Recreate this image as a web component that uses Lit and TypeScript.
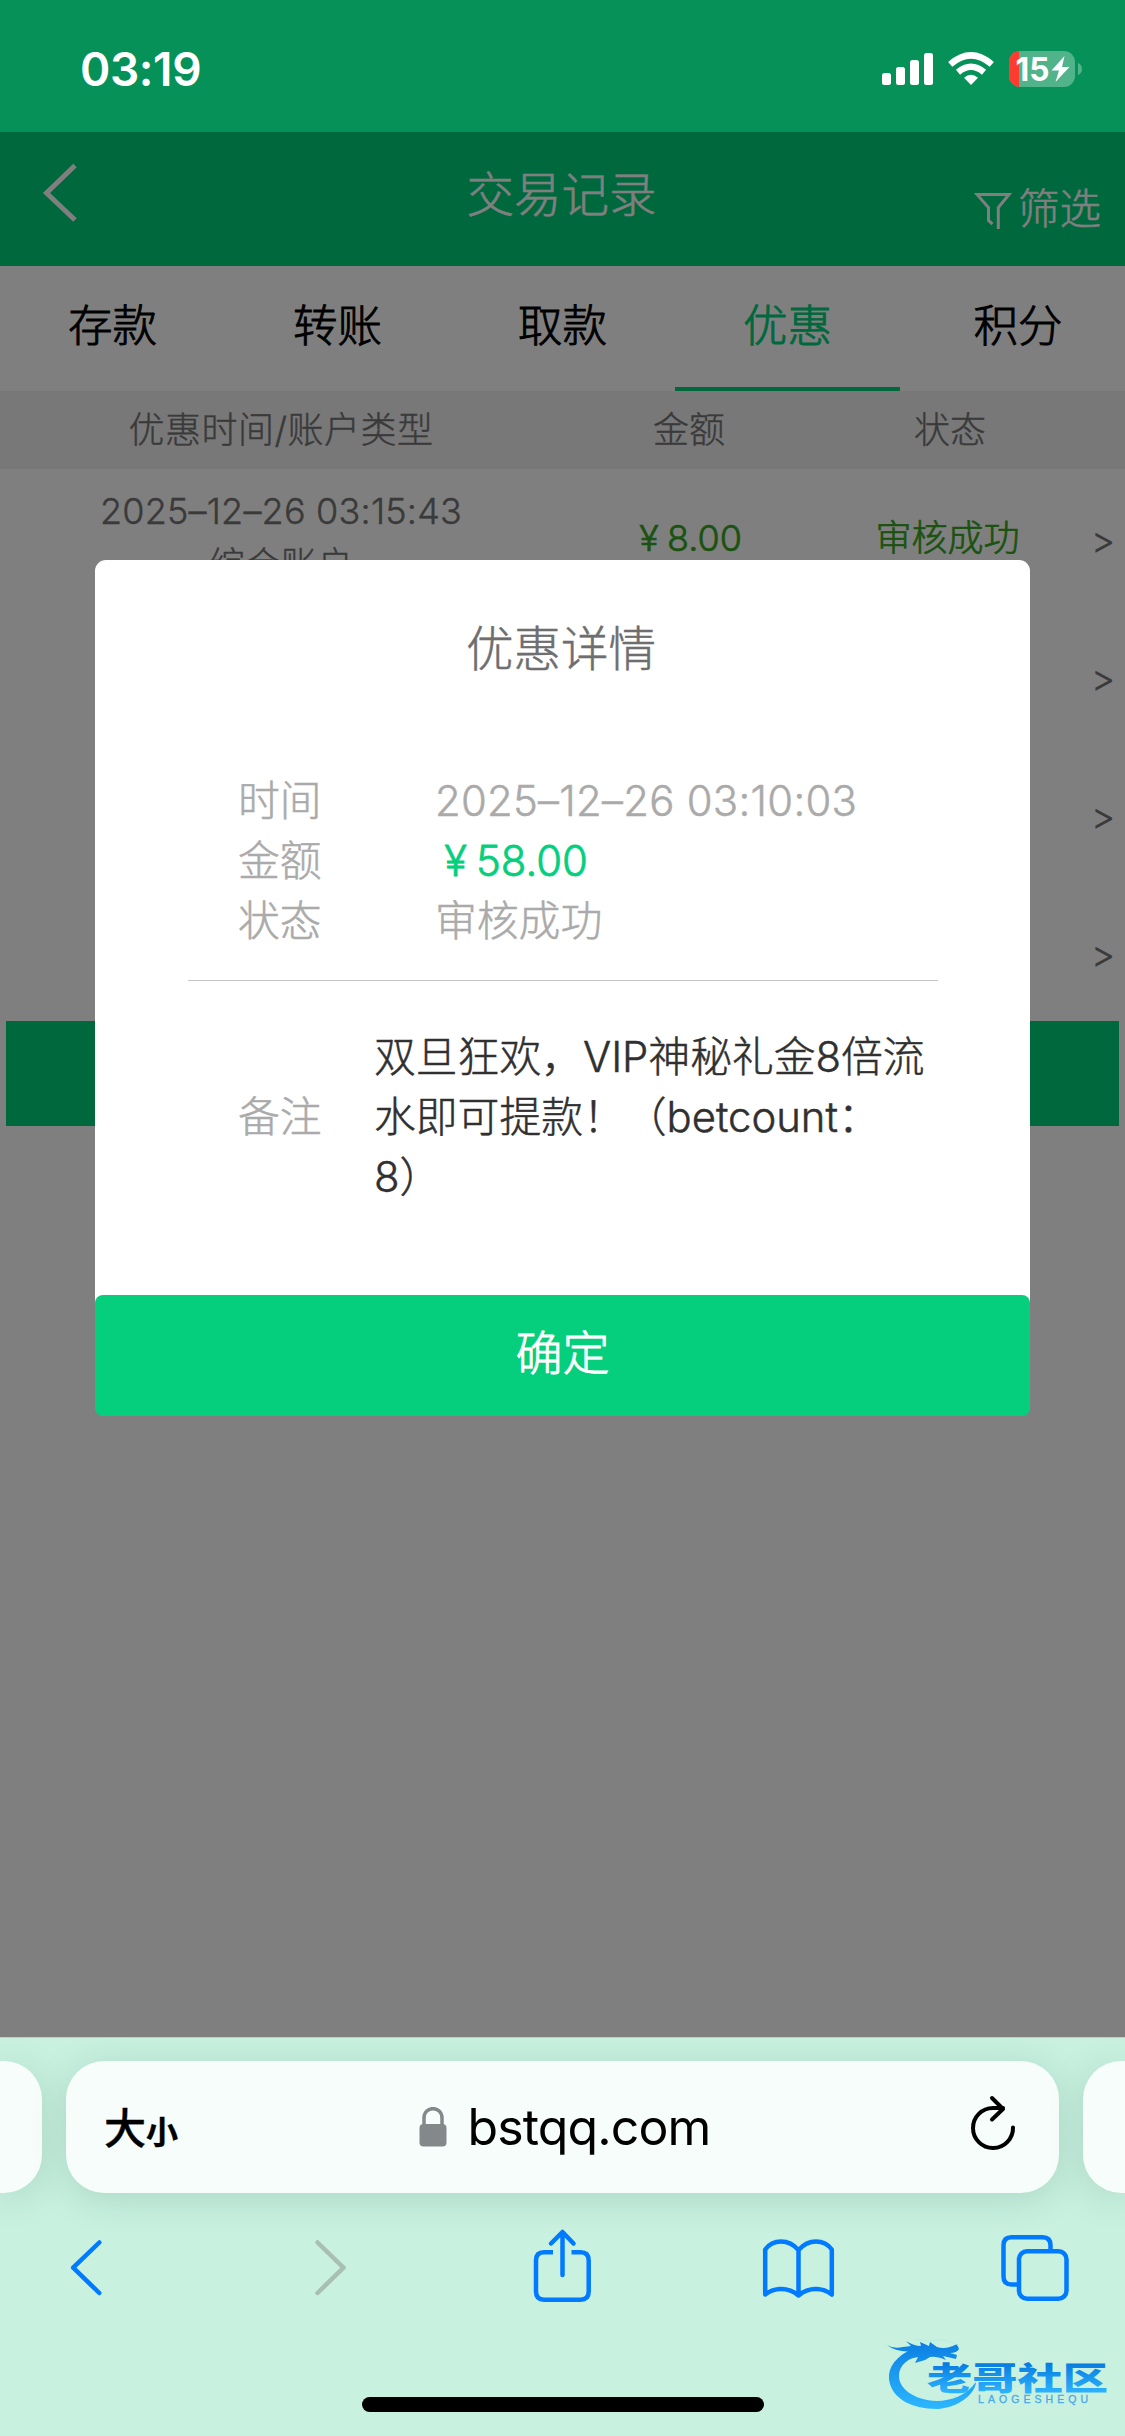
import { LitElement, html, css } from "lit";
import { customElement } from "lit/decorators.js";
import { classMap } from "lit/directives/class-map.js";

const TABS = ["存款", "转账", "取款", "优惠", "积分"];

interface RecordRow {
  time?: string;
  account?: string;
  amount?: string;
  status?: string;
}

const ROWS: RecordRow[] = [
  { time: "2025–12–26 03:15:43", account: "综合账户", amount: "8.00", status: "审核成功" },
  {},
  {},
  {},
];

@customElement("status-bar")
class StatusBar extends LitElement {
  static styles = css`
    :host {
      display: flex;
      justify-content: space-between;
      height: 132px;
      box-sizing: border-box;
      padding: 40px 43px 0 80px;
      background: #059158;
      color: #fff;
    }
    .time {
      font-size: 46px;
      line-height: 58px;
      font-weight: 600;
      letter-spacing: -0.4px;
    }
    .icons { display: block; width: 202px; height: 58px; }
    .level { font-size: 33px; font-weight: 700; }
  `;
  render() {
    return html`
      <span class="time">03:19</span>
      <svg class="icons" viewBox="880 40 202 58">
        <g fill="#fff">
          <rect x="882" y="73" width="9" height="12" rx="2.5" />
          <rect x="896" y="67" width="9" height="18" rx="2.5" />
          <rect x="910" y="60" width="9" height="25" rx="2.5" />
          <rect x="924" y="53" width="9" height="32" rx="2.5" />
          <path d="M971 85 l-7 -7.3 q7 -5.8 14 0z" />
        </g>
        <g fill="none" stroke="#fff" stroke-width="6.4">
          <path d="M950.2 64.3 q20.8 -18 41.6 0" />
          <path d="M958 72.3 q13 -11 26 0" />
        </g>
        <clipPath id="cell"><rect x="1009" y="51" width="66" height="36" rx="11" /></clipPath>
        <g clip-path="url(#cell)">
          <rect x="1009" y="51" width="66" height="36" fill="#50b38a" />
          <rect x="1009" y="51" width="10" height="36" fill="#ff3b30" />
        </g>
        <path d="M1078 63 q4 1.5 4 6 q0 4.5 -4 6z" fill="#50b38a" />
        <text class="level" x="1015.5" y="81" fill="#fff" textLength="34" lengthAdjust="spacingAndGlyphs">15</text>
        <path d="M1064.5 56 L1051.5 70.5 H1059 L1055.5 82 L1069.5 67 H1062z" fill="#fff" />
      </svg>
    `;
  }
}

@customElement("nav-header")
class NavHeader extends LitElement {
  static styles = css`
    :host {
      display: grid;
      grid-template-columns: 1fr auto 1fr;
      height: 134px;
      background: #00d07a;
      color: #fff;
      font-weight: 300;
      -webkit-text-stroke: 0.5px currentColor;
    }
    .back { width: 44px; height: 66px; margin: 28px 0 0 39px; }
    .title { font-size: 47.5px; line-height: 126px; margin-left: -2px; }
    .filter {
      display: flex;
      justify-content: flex-end;
      gap: 6px;
      padding: 47px 24px 0 0;
      font-size: 41.5px;
      line-height: 60px;
    }
    .funnel { width: 38px; height: 38px; margin-top: 13px; }
  `;
  render() {
    return html`
      <svg class="back" viewBox="0 0 44 66" fill="none" stroke="#fff" stroke-width="5">
        <path d="M36 5.5 L7.5 33 L36 60" />
      </svg>
      <span class="title">交易记录</span>
      <span class="filter">
        <svg class="funnel" viewBox="0 0 38 38" fill="none" stroke="#fff" stroke-width="3">
          <path d="M24.3 37 V15.5 L35 2.500 H3 L14.500 15.500 V28.500 L18.500 32" />
        </svg>
        <span>筛选</span>
      </span>
    `;
  }
}

@customElement("record-list")
class RecordList extends LitElement {
  static styles = css`
    :host { display: block; background: #fff; color: #747474; font-weight: 300; -webkit-text-stroke: 0.4px currentColor; }
    .tabs { display: grid; grid-template-columns: repeat(5, 1fr); height: 125px; color: #000; -webkit-text-stroke: 0.9px currentColor; }
    .tab {
      box-sizing: border-box;
      font-size: 44.5px;
      line-height: 121px;
      text-align: center;
      border-bottom: 4px solid transparent;
    }
    .tab:last-child { padding-left: 11px; }
    .active { color: #00d07a; border-color: #00d07a; }
    .row { display: grid; grid-template-columns: 562px 254px 268px 41px; text-align: center; font-size: 36px; }
    .head { height: 78px; line-height: 78px; background: #f0f0f0; }
    .wide { letter-spacing: 0.5px; }
    .item { height: 138px; line-height: 138px; }
    .when { display: flex; flex-direction: column; padding-top: 15px; line-height: 54px; }
    .date { letter-spacing: 0.2px; font-feature-settings: "calt" 0; }
    .ok { color: #38a51f; margin-left: -5px; -webkit-text-stroke: 0.7px currentColor; }
    .yen { display: inline-block; width: 36px; }
    .go { font-size: 37px; line-height: 142px; margin-left: -3px; }
    .more { height: 105px; margin: 0 6px; background: #00d07a; }
  `;
  render() {
    return html`
      <div class="tabs">
        ${TABS.map((t) => html`<span class=${classMap({ tab: true, active: t === "优惠" })}>${t}</span>`)}
      </div>
      <div class="row head"><span class="wide">优惠时间/账户类型</span><span>金额</span><span>状态</span></div>
      ${ROWS.map(
        (r) => html`
          <div class="row item">
            <span class="when">
              ${r.time ? html`<span class="date">${r.time}</span><span>${r.account}</span>` : ""}
            </span>
            <span class="ok">${r.amount ? html`<span class="yen">¥</span>${r.amount}` : ""}</span>
            <span class="ok">${r.status ?? ""}</span>
            <span class="go">&gt;</span>
          </div>
        `
      )}
      <div class="more"></div>
    `;
  }
}

@customElement("detail-dialog")
class DetailDialog extends LitElement {
  static styles = css`
    :host {
      display: block;
      width: 935px;
      border-radius: 11px;
      background: #fff;
      color: #aaa;
      font-size: 41.8px;
      font-weight: 300;
      -webkit-text-stroke: 0.5px currentColor;
    }
    .title { height: 210px; line-height: 178px; margin-left: -3px; text-align: center; font-size: 47.5px; color: #6e6e6e; }
    .fields { display: grid; grid-template-columns: 197px 1fr; line-height: 60px; margin: 0 92px 0 93px; padding: 1px 0 29px 50px; border-bottom: 1px solid #c4c4c4; }
    .date { letter-spacing: 0.3px; font-feature-settings: "calt" 0; }
    .money { color: #05cf7d; -webkit-text-stroke: 0.8px currentColor; }
    .yen { display: inline-block; width: 41px; text-align: center; }
    .remark { display: grid; grid-template-columns: 136px 1fr; align-items: center; line-height: 60px; height: 314px; box-sizing: border-box; padding: 0 0 43px 143px; }
    .text { color: #303030; white-space: nowrap; font-feature-settings: "calt" 0; }
    .confirm {
      height: 121px;
      line-height: 116px;
      border-radius: 8px;
      background: #05cf7d;
      color: #fff;
      text-align: center;
      font-size: 47px;
      -webkit-text-stroke: 0.8px currentColor;
    }
  `;
  render() {
    return html`
      <div class="title">优惠详情</div>
      <div class="fields">
        <span>时间</span><span class="date">2025–12–26 03:10:03</span>
        <span>金额</span><span class="money"><span class="yen">¥</span>58.00</span>
        <span>状态</span><span>审核成功</span>
      </div>
      <div class="remark">
        <span>备注</span>
        <span class="text">双旦狂欢，VIP神秘礼金8倍流<br />水即可提款！（betcount：<br />8）</span>
      </div>
      <div class="confirm">确定</div>
    `;
  }
}

@customElement("site-badge")
class SiteBadge extends LitElement {
  static styles = css`
    :host { display: block; }
    .mark { display: block; width: 225px; height: 76px; }
    .name { font-family: "Noto Sans CJK SC", sans-serif; font-size: 32px; font-weight: 900; }
    .latin { font-family: "Liberation Sans", sans-serif; font-size: 10.5px; }
  `;
  render() {
    return html`
      <svg class="mark" viewBox="885 2336 225 76">
        <defs>
          <linearGradient id="ring" gradientUnits="userSpaceOnUse" x1="0" y1="2342" x2="0" y2="2408">
            <stop offset="0" stop-color="#0b7fe2" /><stop offset="1" stop-color="#2bb6ff" />
          </linearGradient>
          <linearGradient id="ink" gradientUnits="userSpaceOnUse" x1="0" y1="2363" x2="0" y2="2392">
            <stop offset="0" stop-color="#067be0" /><stop offset="1" stop-color="#2cb2fd" />
          </linearGradient>
        </defs>
        <g fill="url(#ring)">
          <path d="M914 2348 C896 2356 888 2367 889 2379 C891 2398 911 2409 937 2409 C957 2408 975 2395 976 2382 C967 2395 951 2401 937 2401 C914 2400 899 2389 899 2376 C899 2365 908 2358 922 2355 L926 2350z" />
          <path d="M887 2345 Q893 2349 903 2347 L911 2346 L906 2341 Q914 2346 921 2346 L920 2342 L929 2346 L930 2342 L937 2347 Q946 2350 957 2344 L959 2349 Q957 2353 950 2353 L957 2355 L956 2359 L943 2356 L946 2360 Q936 2356 930 2357 L925 2360 L915 2363 L918 2357 Q908 2360 901 2358 L914 2351 Q897 2353 887 2345z" />
        </g>
        <path d="M914 2339 Q929 2342 941 2340 Q956 2342 958 2346" fill="none" stroke="#b4e8e2" stroke-width="0.7" />
        <text class="name" x="927" y="2389.5" fill="url(#ink)" textLength="181" lengthAdjust="spacingAndGlyphs">老哥社区</text>
        <text class="latin" x="978" y="2402.5" fill="#4aa9ea" stroke="#4aa9ea" stroke-width="0.3" textLength="110">LAOGESHEQU</text>
      </svg>
    `;
  }
}

@customElement("browser-bar")
class BrowserBar extends LitElement {
  static styles = css`
    :host {
      display: flex;
      flex-direction: column;
      position: relative;
      height: 399px;
      box-sizing: border-box;
      border-top: 1px solid #b4d3c6;
      background: #c8f1e0;
      overflow: hidden;
    }
    .address { display: grid; grid-template-columns: 42px 993px 42px; gap: 24px; height: 132px; margin-top: 23px; }
    .pill { border-radius: 38px; background: #f6fdfa; box-shadow: 0 6px 36px rgba(20, 70, 45, 0.15); }
    .left { border-radius: 0 38px 38px 0; }
    .right { border-radius: 38px 0 0 38px; }
    .main { display: grid; grid-template-columns: 1fr auto 1fr; align-items: center; padding: 0 40px 0 38px; color: #000; }
    .size { font-size: 42px; font-weight: 500; margin-top: -3px; -webkit-text-stroke: 0.4px currentColor; }
    .small { font-size: 32px; font-weight: 700; }
    .host { display: flex; align-items: center; gap: 21px; padding-left: 6px; font-size: 50px; line-height: 60px; letter-spacing: -0.9px; }
    .lock { width: 28px; height: 40px; }
    .reload { width: 52px; height: 60px; justify-self: end; margin-top: -8px; }
    .tools { display: block; width: 1125px; height: 90px; margin-top: 25px; }
    .home { width: 402px; height: 15px; margin: 89px 0 0 362px; border-radius: 8px; background: #000; }
    .badge { position: absolute; left: 885px; top: 298px; }
  `;
  render() {
    return html`
      <div class="address">
        <div class="pill left"></div>
        <div class="pill main">
          <span class="size">大<span class="small">小</span></span>
          <span class="host">
            <svg class="lock" viewBox="0 0 28 40">
              <rect x="0.5" y="17" width="27" height="22.5" rx="4" fill="#85888b" />
              <path d="M5 18 V11 C5 -1.5 23 -1.5 23 11 V18" fill="none" stroke="#85888b" stroke-width="3.5" />
            </svg>
            <span>bstqq.com</span>
          </span>
          <svg class="reload" viewBox="967 2095 52 60" fill="none" stroke="#000" stroke-width="4" stroke-linecap="round" stroke-linejoin="round">
            <path d="M1013 2129.5 A20 20 0 1 1 993 2110 H1003" />
            <path d="M992 2100 L1003 2111 L992 2121.5" />
          </svg>
        </div>
        <div class="pill right"></div>
      </div>
      <svg class="tools" viewBox="0 2218 1125 90" fill="none" stroke="#007aff" stroke-width="4.5" stroke-linecap="round" stroke-linejoin="round">
        <path d="M99.3 2242.5 L73.2 2267.700 L99.300 2293" />
        <path d="M317.500 2242.500 L343.500 2267.700 L317.500 2293" stroke="#a9bfb5" />
        <path d="M553 2252.300 H544 Q536 2252.300 536 2260.500 V2291.500 Q536 2299.700 544 2299.700 H580.500 Q588.700 2299.700 588.700 2291.500 V2260.500 Q588.700 2252.300 580.500 2252.300 H571.500" stroke-linecap="butt" />
        <path d="M562.500 2275 V2232.500 M551 2243.500 L562.500 2232 L573.500 2243.500" />
        <path d="M798.500 2250 Q791 2241.500 781 2241.500 Q771 2241.500 765.200 2249.500 V2294.500 Q772 2289 781 2289 Q791 2289 798.500 2295.500 Q806 2289 816 2289 Q825 2289 831.800 2294.500 V2249.500 Q826 2241.500 816 2241.500 Q806 2241.500 798.500 2250 V2295" />
        <path d="M1018 2284.500 H1011.500 Q1003.500 2284.500 1003.500 2276.500 V2245.300 Q1003.500 2237.300 1011.500 2237.300 H1042.500 Q1050.500 2237.300 1050.500 2245.300 V2251" stroke-linecap="butt" />
        <rect x="1019" y="2251.300" width="47.500" height="47.500" rx="8" />
      </svg>
      <div class="home"></div>
      <site-badge class="badge"></site-badge>
    `;
  }
}

@customElement("app-root")
class AppRoot extends LitElement {
  static styles = css`
    :host {
      display: flex;
      flex-direction: column;
      width: 1125px;
      height: 2436px;
      overflow: hidden;
      font-family: Inter, "Noto Sans CJK SC", sans-serif;
    }
    .page { position: relative; flex: 1; background: #fff; }
    .shade {
      position: absolute;
      inset: 0;
      display: flex;
      justify-content: center;
      align-items: flex-start;
      padding-top: 428px;
      background: rgba(0, 0, 0, 0.5);
    }
  `;
  render() {
    return html`
      <status-bar></status-bar>
      <div class="page">
        <nav-header></nav-header>
        <record-list></record-list>
        <div class="shade"><detail-dialog></detail-dialog></div>
      </div>
      <browser-bar></browser-bar>
    `;
  }
}
